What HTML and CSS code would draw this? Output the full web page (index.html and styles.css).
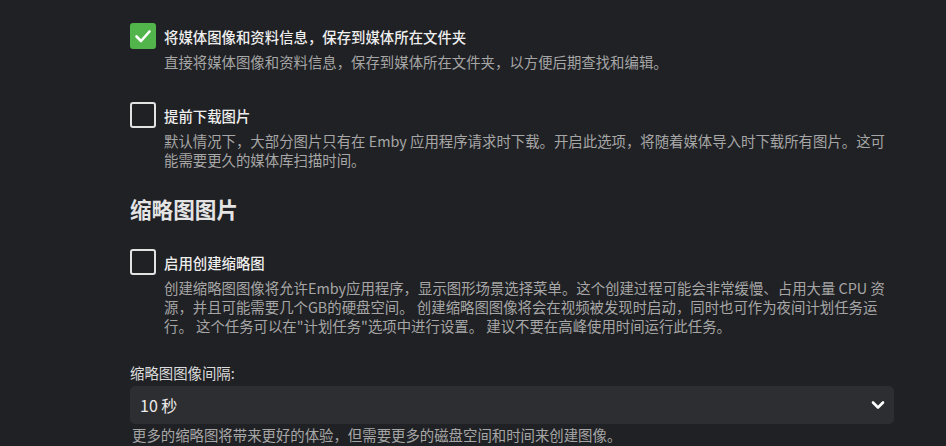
FILE: index.html
```html
<!DOCTYPE html>
<html>
  <head>
    <meta charset="utf-8">
    <title>缩略图设置</title>
    <link rel="stylesheet" href="styles.css">
  </head>

  <body>
    <div class="container">

      <!-- Save artwork into media folders -->
      <div class="checkbox-item">
        <label class="checkbox-row">
          <span class="checkbox checked">
            <svg width="26" height="26" viewBox="0 0 26 26">
              <path d="M6.5 13.5 L11 18 L19.5 8.5" fill="none" stroke="#fff" stroke-width="2.6" stroke-linecap="round" stroke-linejoin="round"/>
            </svg>
          </span>
          <span class="checkbox-label">将媒体图像和资料信息，保存到媒体所在文件夹</span>
        </label>
        <div class="field-desc">直接将媒体图像和资料信息，保存到媒体所在文件夹，以方便后期查找和编辑。</div>
      </div>

      <!-- Download images in advance -->
      <div class="checkbox-item">
        <label class="checkbox-row">
          <span class="checkbox"></span>
          <span class="checkbox-label">提前下载图片</span>
        </label>
        <div class="field-desc">默认情况下，大部分图片只有在 Emby 应用程序请求时下载。开启此选项，将随着媒体导入时下载所有图片。这可能需要更久的媒体库扫描时间。</div>
      </div>

      <h2 class="section-title">缩略图图片</h2>

      <!-- Thumbnail extraction -->
      <div class="checkbox-item">
        <label class="checkbox-row">
          <span class="checkbox"></span>
          <span class="checkbox-label">启用创建缩略图</span>
        </label>
        <div class="field-desc">创建缩略图图像将允许Emby应用程序，显示图形场景选择菜单。这个创建过程可能会非常缓慢、占用大量 CPU 资源，并且可能需要几个GB的硬盘空间。 创建缩略图图像将会在视频被发现时启动，同时也可作为夜间计划任务运行。 这个任务可以在"计划任务"选项中进行设置。 建议不要在高峰使用时间运行此任务。</div>
      </div>

      <!-- Interval select -->
      <div class="select-field">
        <div class="select-label">缩略图图像间隔:</div>
        <div class="select-box">
          <span>10 秒</span>
          <svg width="14" height="10" viewBox="0 0 14 10">
            <path d="M2 2.5 L7 7.5 L12 2.5" fill="none" stroke="#fff" stroke-width="2.6" stroke-linecap="round" stroke-linejoin="round"/>
          </svg>
        </div>
        <div class="select-help">更多的缩略图将带来更好的体验，但需要更多的磁盘空间和时间来创建图像。</div>
      </div>

    </div>
  </body>
</html>
```

FILE: styles.css
```css
* {
  margin: 0;
  padding: 0;
  box-sizing: border-box;
}

body {
  background: #202124;
  font-family: "Noto Sans CJK SC", "Noto Sans", sans-serif;
  font-size: 14.4px;
  color: #e6e6e6;
  overflow: hidden;
}

.container {
  width: 894px;
  padding: 23px 0 0 130px;
}

.checkbox-item {
  margin-bottom: 31px;
}

.checkbox-row {
  display: flex;
  align-items: center;
  gap: 8px;
  height: 26px;
}

.checkbox {
  width: 26px;
  height: 26px;
  border: 2px solid #e2e2e2;
  border-radius: 3px;
  flex-shrink: 0;
}

.checkbox.checked {
  background: #52b54b;
  border: none;
}

.checkbox svg {
  display: block;
}

.checkbox-label {
  color: #eeeeee;
  line-height: 19px;
  font-weight: 500;
}

.field-desc {
  margin-top: 3px;
  padding-left: 34px;
  line-height: 19px;
  color: #a6a6a6;
}

.section-title {
  font-size: 21.6px;
  line-height: 22px;
  font-weight: bold;
  color: #e4e4e4;
  margin-top: -2px;
  margin-bottom: 29px;
}

.select-field {
  margin-top: -3px;
}

.select-label {
  line-height: 19px;
  color: #dcdcdc;
}

.select-box {
  margin-top: 4px;
  height: 38px;
  background: #2d2e32;
  border-radius: 5px;
  display: flex;
  align-items: center;
  justify-content: space-between;
  padding: 0 9px 0 10px;
  font-size: 16px;
  color: #eaeaea;
}

.select-box svg {
  display: block;
}

.select-help {
  margin-top: 1px;
  padding-left: 2px;
  line-height: 19px;
  color: #a6a6a6;
}
```
